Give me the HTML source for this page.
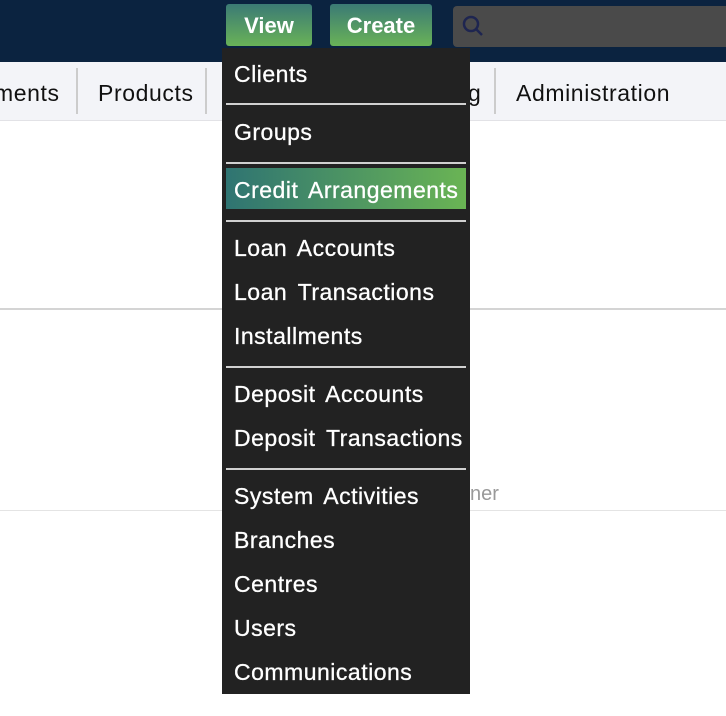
<!DOCTYPE html>
<html><head><style>
body{margin:0;width:726px;height:716px;background:#fff;position:relative;overflow:hidden;font-family:"Liberation Sans",sans-serif;}
.top{position:absolute;left:0;top:0;width:726px;height:62px;background:#0b2340;}
.btn{position:absolute;top:4px;height:42px;border-radius:3px;background:linear-gradient(#3b7a75,#69b257);color:#fff;font-size:22px;font-weight:bold;line-height:44px;text-align:center;}
.search{position:absolute;left:453px;top:6px;width:280px;height:41px;background:#4a4a4a;border-radius:4px;}
.nav{position:absolute;left:0;top:62px;width:726px;height:58px;background:#f3f4f8;border-bottom:1px solid #e2e2e6;}
.nav span{position:absolute;top:18px;font-size:23px;letter-spacing:0.6px;color:#111;}
.sep{position:absolute;top:6px;width:2px;height:46px;background:#ccc;}
.line{position:absolute;left:0;width:726px;}
.dd{position:absolute;left:222px;top:48px;width:248px;height:646px;background:#222;}
.it{position:absolute;left:12px;font-size:23px;color:#fff;word-spacing:4px;letter-spacing:0.5px;line-height:26px;-webkit-text-stroke:0.3px #fff;}
.hr{position:absolute;left:4px;width:240px;height:2px;background:#d0d0d0;}
</style></head><body>
<div class="top"></div>
<div class="btn" style="left:226px;width:86px">View</div>
<div class="btn" style="left:330px;width:102px">Create</div>
<div class="search"><svg width="30" height="30" style="position:absolute;left:6px;top:6px"><circle cx="12" cy="12" r="7" fill="none" stroke="#1e2550" stroke-width="2.5"/><line x1="17" y1="17" x2="23" y2="23" stroke="#1e2550" stroke-width="2.5"/></svg></div>
<div class="nav">
<span style="left:-6px">ments</span><div class="sep" style="left:76px"></div>
<span style="left:98px">Products</span><div class="sep" style="left:205px"></div>
<span style="left:468px">g</span><div class="sep" style="left:494px"></div>
<span style="left:516px">Administration</span>
</div>
<div class="line" style="top:308px;height:2px;background:#d4d4d4"></div>
<div class="line" style="top:510px;height:1px;background:#e4e4e4"></div>
<div style="position:absolute;left:470px;top:483px;font-size:20px;color:#999">ner</div>
<div class="dd">
<div class="it" style="top:13px">Clients</div>
<div class="hr" style="top:55px"></div>
<div class="it" style="top:71px">Groups</div>
<div class="hr" style="top:114px"></div>
<div style="position:absolute;left:4px;top:120px;width:240px;height:41px;background:linear-gradient(90deg,#2f7472,#6ab454)"></div>
<div class="it" style="top:129px">Credit Arrangements</div>
<div class="hr" style="top:172px"></div>
<div class="it" style="top:187px">Loan Accounts</div>
<div class="it" style="top:231px">Loan Transactions</div>
<div class="it" style="top:275px">Installments</div>
<div class="hr" style="top:318px"></div>
<div class="it" style="top:333px">Deposit Accounts</div>
<div class="it" style="top:377px">Deposit Transactions</div>
<div class="hr" style="top:420px"></div>
<div class="it" style="top:435px">System Activities</div>
<div class="it" style="top:479px">Branches</div>
<div class="it" style="top:523px">Centres</div>
<div class="it" style="top:567px">Users</div>
<div class="it" style="top:611px">Communications</div>
</div>
</body></html>
